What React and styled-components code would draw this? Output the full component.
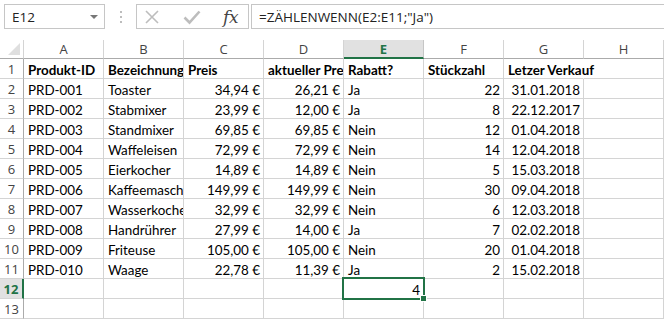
import React from "react";
import styled, { createGlobalStyle, css } from "styled-components";

const Global = createGlobalStyle`
  html, body { margin: 0; padding: 0; background: #fff; }
  body { width: 664px; height: 319px; overflow: hidden; }
`;

const GREEN = "#217346";
const GRID = "#d4d4d4";

const Page = styled.div`
  width: 664px;
  height: 319px;
  display: flex;
  flex-direction: column;
  background: #fff;
  overflow: hidden;
`;

const Toolbar = styled.div`
  height: 40px;
  box-sizing: border-box;
  padding: 4px 0 0 4px;
  display: flex;
  align-items: flex-start;
  font-family: "Open Sans", "Noto Sans", sans-serif;
`;

const NameBox = styled.div`
  width: 101px;
  height: 25px;
  box-sizing: border-box;
  border: 1px solid #c6c6c6;
  display: flex;
  align-items: center;
  justify-content: space-between;
  padding: 0 6px 0 7px;
  font-size: 13.5px;
  color: #222;
`;

const Caret = styled.span`
  width: 0;
  height: 0;
  border-left: 4px solid transparent;
  border-right: 4px solid transparent;
  border-top: 4px solid #777;
`;

const Dots = styled.div`
  width: 31px;
  height: 25px;
  display: flex;
  align-items: center;
  justify-content: center;
`;

const ButtonBox = styled.div`
  width: 113px;
  height: 25px;
  box-sizing: border-box;
  border: 1px solid #c6c6c6;
  display: flex;
  align-items: center;
  padding: 0 6px 0 7px;
  justify-content: space-between;
`;

const Fx = styled.span`
  font-family: "DejaVu Serif", "Liberation Serif", serif;
  font-style: italic;
  font-size: 17px;
  color: #444;
  padding-right: 4px;
  letter-spacing: -0.5px;
`;

const FormulaBox = styled.div`
  flex: 1;
  margin-left: 2px;
  height: 25px;
  box-sizing: border-box;
  border: 1px solid #c6c6c6;
  border-right: none;
  display: flex;
  align-items: center;
  padding-left: 7px;
  font-size: 13.5px;
  color: #222;
  white-space: nowrap;
`;

const Sheet = styled.div`
  display: grid;
  grid-template-columns: 24px repeat(8, 80px);
  grid-template-rows: 19px repeat(13, 20px);
  font-family: Lato, "Noto Sans", sans-serif;
  font-size: 13.4px;
  color: #000;
`;

const Corner = styled.div`
  box-sizing: border-box;
  border-right: 1px solid ${GRID};
  border-bottom: 1px solid #ababab;
  position: relative;
  &::after {
    content: "";
    position: absolute;
    right: 3px;
    bottom: 3px;
    width: 0;
    height: 0;
    border-left: 12px solid transparent;
    border-bottom: 12px solid #dfdfdf;
  }
`;

const ColHead = styled.div`
  box-sizing: border-box;
  border-right: 1px solid ${GRID};
  border-bottom: 1px solid #ababab;
  display: flex;
  align-items: center;
  justify-content: center;
  font-family: "Open Sans", "Noto Sans", sans-serif;
  font-size: 13px;
  color: #444;
  ${(p) =>
    p.$active &&
    css`
      background: #e1e1e1;
      color: ${GREEN};
      font-weight: 700;
      border-bottom: 2px solid ${GREEN};
      border-right-color: #c6c6c6;
    `}
`;

const RowHead = styled.div`
  box-sizing: border-box;
  border-right: 1px solid #ababab;
  border-bottom: 1px solid ${GRID};
  display: flex;
  align-items: center;
  justify-content: center;
  font-family: "Open Sans", "Noto Sans", sans-serif;
  font-size: 13px;
  color: #444;
  ${(p) =>
    p.$active &&
    css`
      background: #e1e1e1;
      color: ${GREEN};
      font-weight: 700;
      border-right: 2px solid ${GREEN};
    `}
`;

const Cell = styled.div`
  box-sizing: border-box;
  border-right: 1px solid ${GRID};
  border-bottom: 1px solid ${GRID};
  padding: 2px 3px 0 4px;
  display: flex;
  align-items: center;
  justify-content: ${(p) => (p.$right ? "flex-end" : "flex-start")};
  white-space: nowrap;
  overflow: hidden;
  font-weight: ${(p) => (p.$bold ? 700 : 400)};
  position: relative;
  ${(p) =>
    p.$spill &&
    css`
      overflow: visible;
      border-right-color: transparent;
      z-index: 1;
    `}
  ${(p) =>
    p.$selected &&
    css`
      overflow: visible;
      z-index: 2;
      &::after {
        content: "";
        position: absolute;
        left: -2px;
        top: -2px;
        right: -2px;
        bottom: -2px;
        border: 2px solid ${GREEN};
        pointer-events: none;
      }
      &::before {
        content: "";
        position: absolute;
        right: -4px;
        bottom: -4px;
        width: 5px;
        height: 5px;
        background: ${GREEN};
        border: 1px solid #fff;
        z-index: 3;
      }
    `}
`;

const XIcon = () => (
  <svg width="16" height="16" viewBox="0 0 16 16">
    <path d="M2 2 L14 14 M14 2 L2 14" stroke="#bdbdbd" strokeWidth="1.6" fill="none" />
  </svg>
);

const CheckIcon = () => (
  <svg width="18" height="16" viewBox="0 0 18 16">
    <path d="M1.5 8.5 L6.5 13.5 L16.5 2.5" stroke="#bdbdbd" strokeWidth="2.6" fill="none" />
  </svg>
);

const DotsIcon = () => (
  <svg width="4" height="14" viewBox="0 0 4 14">
    <rect x="1" y="1" width="2" height="2" fill="#bdbdbd" />
    <rect x="1" y="6" width="2" height="2" fill="#bdbdbd" />
    <rect x="1" y="11" width="2" height="2" fill="#bdbdbd" />
  </svg>
);

const cols = ["A", "B", "C", "D", "E", "F", "G", "H"];
const rightCols = [2, 3, 5, 6];

const rows = [
  ["Produkt-ID", "Bezeichnung", "Preis", "aktueller Preis", "Rabatt?", "Stückzahl", "Letzer Verkauf", ""],
  ["PRD-001", "Toaster", "34,94 €", "26,21 €", "Ja", "22", "31.01.2018", ""],
  ["PRD-002", "Stabmixer", "23,99 €", "12,00 €", "Ja", "8", "22.12.2017", ""],
  ["PRD-003", "Standmixer", "69,85 €", "69,85 €", "Nein", "12", "01.04.2018", ""],
  ["PRD-004", "Waffeleisen", "72,99 €", "72,99 €", "Nein", "14", "12.04.2018", ""],
  ["PRD-005", "Eierkocher", "14,89 €", "14,89 €", "Nein", "5", "15.03.2018", ""],
  ["PRD-006", "Kaffeemaschine", "149,99 €", "149,99 €", "Nein", "30", "09.04.2018", ""],
  ["PRD-007", "Wasserkocher", "32,99 €", "32,99 €", "Nein", "6", "12.03.2018", ""],
  ["PRD-008", "Handrührer", "27,99 €", "14,00 €", "Ja", "7", "02.02.2018", ""],
  ["PRD-009", "Friteuse", "105,00 €", "105,00 €", "Nein", "20", "01.04.2018", ""],
  ["PRD-010", "Waage", "22,78 €", "11,39 €", "Ja", "2", "15.02.2018", ""],
  ["", "", "", "", "4", "", "", ""],
  ["", "", "", "", "", "", "", ""],
];

export default function App() {
  return (
    <Page>
      <Global />
      <Toolbar>
        <NameBox>
          <span>E12</span>
          <Caret />
        </NameBox>
        <Dots>
          <DotsIcon />
        </Dots>
        <ButtonBox>
          <XIcon />
          <CheckIcon />
          <Fx>fx</Fx>
        </ButtonBox>
        <FormulaBox>=ZÄHLENWENN(E2:E11;"Ja")</FormulaBox>
      </Toolbar>
      <Sheet>
        <Corner />
        {cols.map((c) => (
          <ColHead key={c} $active={c === "E"}>
            {c}
          </ColHead>
        ))}
        {rows.map((r, ri) => (
          <React.Fragment key={ri}>
            <RowHead $active={ri === 11}>{ri + 1}</RowHead>
            {r.map((v, ci) => (
              <Cell
                key={ci}
                $bold={ri === 0}
                $right={ri > 0 && (rightCols.includes(ci) || (ri === 11 && ci === 4))}
                $spill={ri === 0 && ci === 6}
                $selected={ri === 11 && ci === 4}
              >
                {v}
              </Cell>
            ))}
          </React.Fragment>
        ))}
      </Sheet>
    </Page>
  );
}
